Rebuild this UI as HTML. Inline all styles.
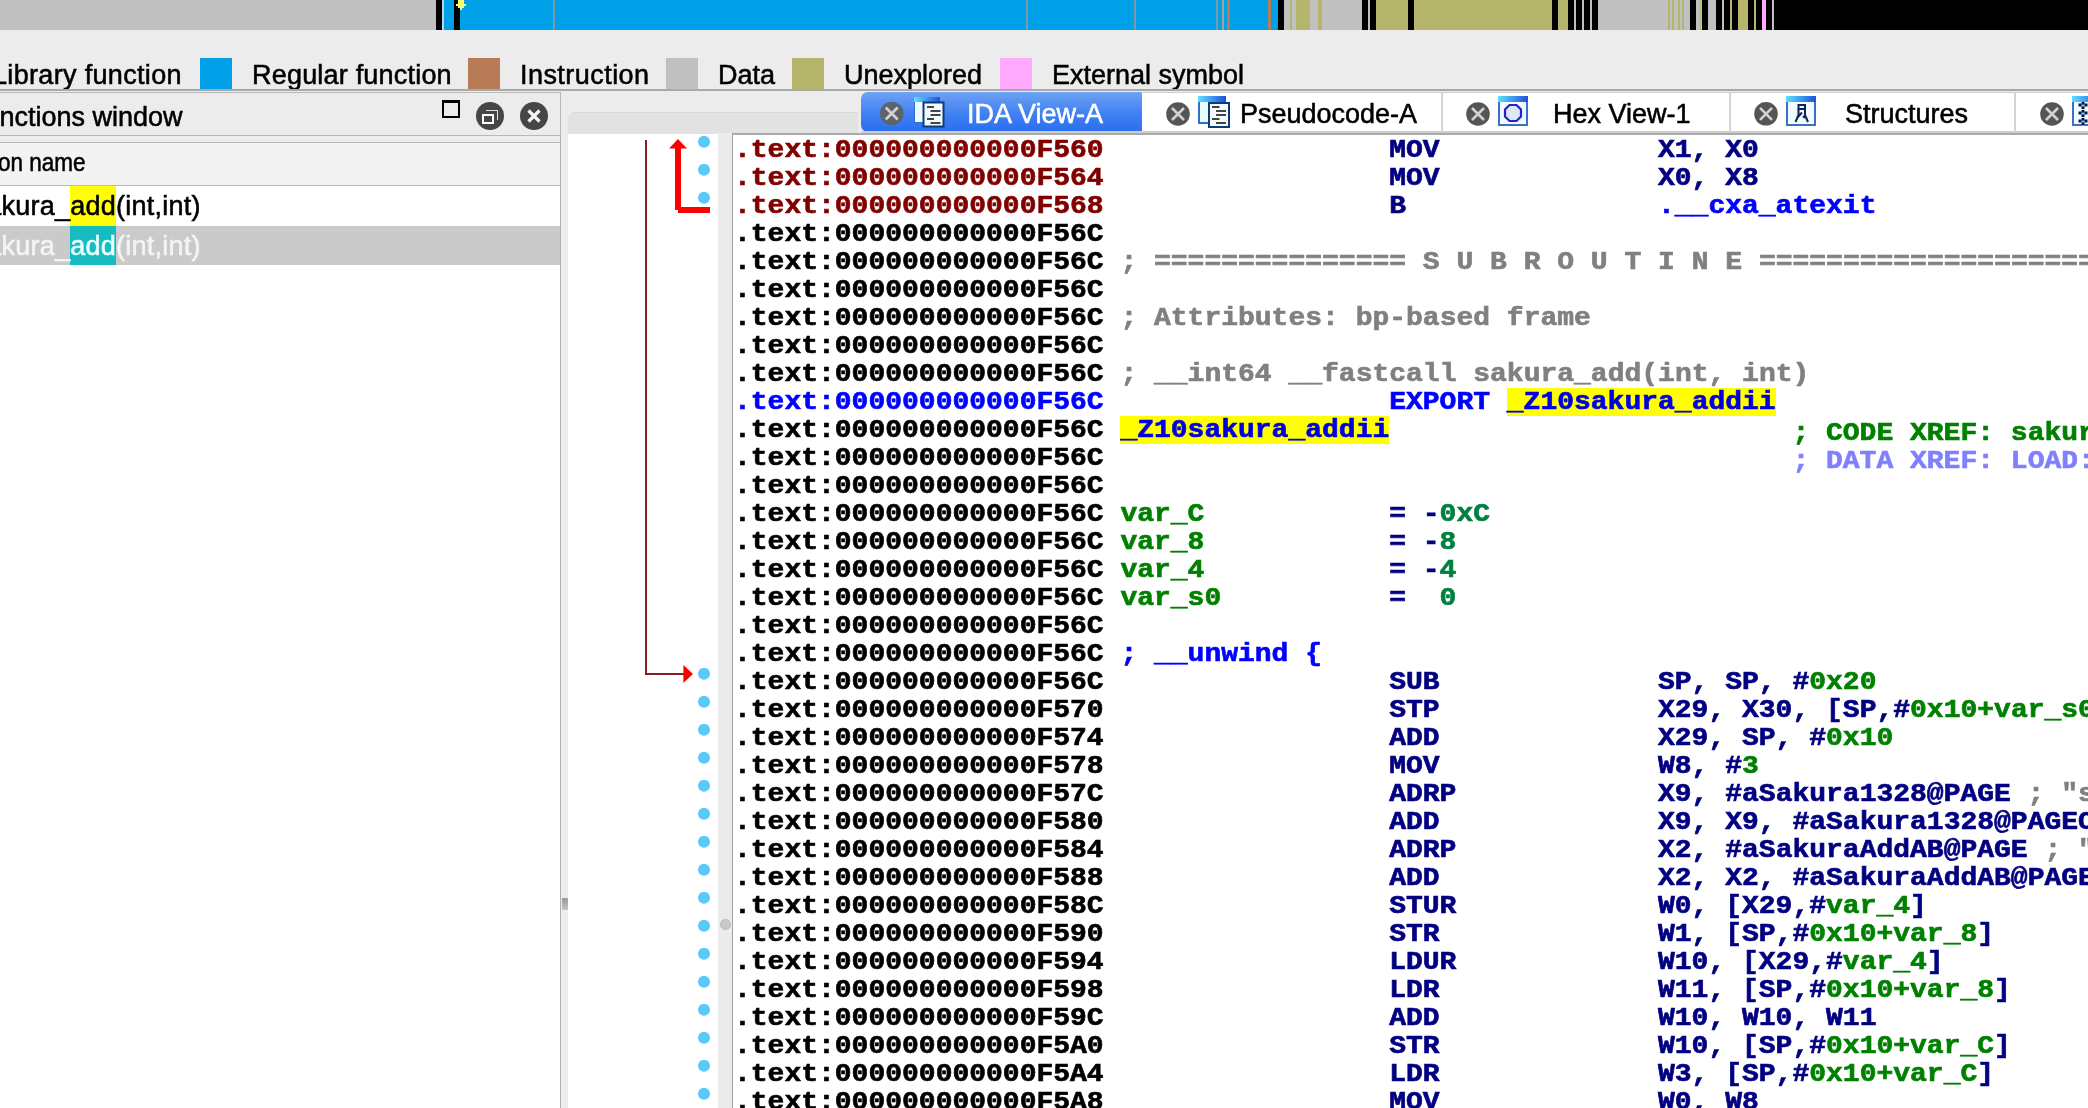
<!DOCTYPE html>
<html><head><meta charset="utf-8">
<style>
*{margin:0;padding:0;box-sizing:border-box}
html,body{width:2088px;height:1108px;overflow:hidden;background:#ececec;position:relative}
body{font-family:"Liberation Sans",sans-serif;color:#000}
.a{position:absolute}
.seg{position:absolute;top:0;height:30px}
.ui{position:absolute;font-size:27px;line-height:30px;white-space:pre;-webkit-text-stroke:0.55px currentColor}
.sq{position:absolute;top:58px;width:32px;height:32px}
.row{position:absolute;left:0;width:2088px;height:28px}
.c{position:absolute;top:0;font-family:"Liberation Mono",monospace;font-weight:bold;font-size:28px;line-height:28px;white-space:pre;height:28px;-webkit-text-stroke:0.7px currentColor;transform:scaleY(0.94);transform-origin:0 21.5px}
.xc{position:absolute;border-radius:50%;background:#555}
</style></head><body>
<div id="root" style="position:absolute;left:0;top:0;width:2088px;height:1108px;overflow:hidden;will-change:transform">
<!-- NAV BAR -->
<div class="a" id="nav" style="left:0;top:0;width:2088px;height:30px;background:#c0c0c0;overflow:hidden"><div class="seg" style="left:436px;width:6px;background:#000"></div><div class="seg" style="left:442px;width:2px;background:#b9d3e3"></div><div class="seg" style="left:444px;width:10px;background:#00a0e8"></div><div class="seg" style="left:454px;width:6px;background:#000"></div><div class="seg" style="left:460px;width:818px;background:#00a0e8"></div><div class="seg" style="left:553px;width:2px;background:#7a9aab"></div><div class="seg" style="left:1026px;width:2px;background:#7a9aab"></div><div class="seg" style="left:1134px;width:2px;background:#7a9aab"></div><div class="seg" style="left:1216px;width:2px;background:#7a9aab"></div><div class="seg" style="left:1222px;width:2px;background:#a9a28a"></div><div class="seg" style="left:1227px;width:3px;background:#b97c58"></div><div class="seg" style="left:1268px;width:3px;background:#b97c58"></div><div class="seg" style="left:1278px;width:6px;background:#000"></div><div class="seg" style="left:1290px;width:2px;background:#b5b56c"></div><div class="seg" style="left:1296px;width:14px;background:#b5b56c"></div><div class="seg" style="left:1318px;width:4px;background:#b5b56c"></div><div class="seg" style="left:1362px;width:6px;background:#000"></div><div class="seg" style="left:1370px;width:6px;background:#000"></div><div class="seg" style="left:1376px;width:32px;background:#b5b56c"></div><div class="seg" style="left:1408px;width:6px;background:#000"></div><div class="seg" style="left:1414px;width:138px;background:#b5b56c"></div><div class="seg" style="left:1552px;width:6px;background:#000"></div><div class="seg" style="left:1558px;width:10px;background:#b5b56c"></div><div class="seg" style="left:1568px;width:6px;background:#000"></div><div class="seg" style="left:1576px;width:6px;background:#000"></div><div class="seg" style="left:1584px;width:6px;background:#000"></div><div class="seg" style="left:1592px;width:6px;background:#000"></div><div class="seg" style="left:1668px;width:2px;background:#b5b56c"></div><div class="seg" style="left:1672px;width:2px;background:#b5b56c"></div><div class="seg" style="left:1678px;width:2px;background:#b5b56c"></div><div class="seg" style="left:1682px;width:2px;background:#b5b56c"></div><div class="seg" style="left:1690px;width:6px;background:#000"></div><div class="seg" style="left:1700px;width:1px;background:#b5b56c"></div><div class="seg" style="left:1702px;width:6px;background:#000"></div><div class="seg" style="left:1716px;width:6px;background:#000"></div><div class="seg" style="left:1724px;width:6px;background:#000"></div><div class="seg" style="left:1730px;width:2px;background:#b5b56c"></div><div class="seg" style="left:1732px;width:6px;background:#000"></div><div class="seg" style="left:1738px;width:10px;background:#b5b56c"></div><div class="seg" style="left:1748px;width:6px;background:#000"></div><div class="seg" style="left:1754px;width:2px;background:#b5b56c"></div><div class="seg" style="left:1756px;width:6px;background:#000"></div><div class="seg" style="left:1762px;width:4px;background:#ffaaff"></div><div class="seg" style="left:1766px;width:6px;background:#000"></div><div class="seg" style="left:1774px;width:314px;background:#000"></div><div class="seg" style="left:458px;width:6px;height:8px;background:#f4ff6e"></div><div class="seg" style="left:456px;top:4px;width:10px;height:2px;background:#f4ff6e"></div><div class="seg" style="left:460px;top:8px;width:2px;height:2px;background:#f4ff6e"></div></div>


<!-- LEGEND -->
<div class="ui" style="left:-8px;top:60px;letter-spacing:0.33px">Library function</div>
<div class="sq" style="left:200px;background:#00a0e8"></div>
<div class="ui" style="left:252px;top:60px;letter-spacing:0.2px">Regular function</div>
<div class="sq" style="left:468px;background:#b97c58"></div>
<div class="ui" style="left:520px;top:60px;letter-spacing:0.45px">Instruction</div>
<div class="sq" style="left:666px;background:#c0c0c0"></div>
<div class="ui" style="left:718px;top:60px">Data</div>
<div class="sq" style="left:792px;background:#b5b56c"></div>
<div class="ui" style="left:844px;top:60px">Unexplored</div>
<div class="sq" style="left:1000px;background:#ffaaff"></div>
<div class="ui" style="left:1052px;top:60px">External symbol</div>
<div class="a" style="left:0;top:89px;width:2088px;height:2px;background:#a9a9a9"></div>

<!-- LEFT PANEL -->
<div class="a" style="left:-2px;top:92px;width:563px;height:44px;border:1px solid #b8b8b8;background:#ececec"></div>
<div class="ui" style="left:-32px;top:102px">Functions window</div>
<div class="a" style="left:442px;top:100px;width:18px;height:18px;border:2px solid #000;border-top-width:3.5px"></div>
<div class="xc" style="left:476px;top:102px;width:28px;height:28px;background:#464646"></div>
<div class="a" style="left:486px;top:110px;width:12px;height:10px;border:1.5px solid #e0e0e0;border-bottom:0;border-left:0"></div>
<div class="a" style="left:482px;top:114px;width:12px;height:10px;background:#464646;border:2px solid #fff"></div>
<div class="xc" style="left:520px;top:102px;width:28px;height:28px;background:#464646"></div>
<svg class="a" style="left:520px;top:102px" width="28" height="28"><path d="M8.5 8.5 L19.5 19.5 M19.5 8.5 L8.5 19.5" stroke="#f4f4f4" stroke-width="3.2"/></svg>

<div class="a" style="left:-2px;top:142px;width:563px;height:44px;border:1px solid #b8b8b8;background:#f3f3f3"></div>
<div class="ui" style="left:-2px;top:146.5px;font-size:25px;transform:scaleX(0.9);transform-origin:left">on name</div>
<div class="a" style="left:0;top:186px;width:560px;height:922px;background:#fff"></div>
<div class="a" style="left:0;top:226px;width:560px;height:39px;background:#cacaca"></div>
<div class="a" style="left:70px;top:186px;width:46px;height:40px;background:#ffff00"></div>
<div class="ui" style="left:-27.6px;top:190.5px;letter-spacing:0.25px">sakura_add(int,int)</div>
<div class="a" style="left:70px;top:226px;width:46px;height:39px;background:#17bcc0"></div>
<div class="ui" style="left:-27.6px;top:230.5px;letter-spacing:0.25px;color:#f4f4f4">sakura_<span style="color:#e8ffff">add</span>(int,int)</div>
<div class="a" style="left:560px;top:136px;width:1px;height:972px;background:#b0b0b0"></div>
<div class="a" style="left:562px;top:898px;width:6px;height:12px;background:linear-gradient(#9a9a9a,#c4c4c4);border-radius:1px"></div>

<!-- TAB BAR -->
<div class="a" style="left:568px;top:112px;width:290px;height:22px;background:#e2e2e2;border-top-left-radius:8px;border-top:1px solid #d8d8d8"></div>
<div class="a" style="left:1141px;top:92px;width:947px;height:40px;background:#fff"></div>
<div class="a" style="left:861px;top:92px;width:281px;height:40px;background:linear-gradient(#6ea2f4,#3f80f2 55%,#2a6ef0);border-radius:7px 0 0 7px"></div>
<div class="a" style="left:861px;top:131px;width:1227px;height:2px;background:#cfcfcf"></div>
<div class="a" style="left:732px;top:133px;width:1356px;height:2px;background:#a9a9a9"></div>
<div class="a" style="left:1141px;top:92px;width:947px;height:1px;background:#cfcfcf"></div>
<div class="a" style="left:1441px;top:93px;width:1.5px;height:38px;background:#d4d4d4"></div>
<div class="a" style="left:1729px;top:93px;width:1.5px;height:38px;background:#d4d4d4"></div>
<div class="a" style="left:2014px;top:93px;width:1.5px;height:38px;background:#d4d4d4"></div>
<svg class="a" style="left:0;top:0" width="2088" height="136">
<defs>
<linearGradient id="tb" x1="0" x2="1" y1="0" y2="0"><stop offset="0" stop-color="#5ee0ff"/><stop offset="1" stop-color="#2050d8"/></linearGradient>
</defs>
<!-- close circles -->
<circle cx="891.7" cy="113.5" r="11.8" fill="#5b636b"/>
<path d="M885.7 107.5 L897.7 119.5 M897.7 107.5 L885.7 119.5" stroke="#d2d2d2" stroke-width="2.6"/>
<circle cx="1178" cy="114" r="11.8" fill="#555"/>
<path d="M1172 108 L1184 120 M1184 108 L1172 120" stroke="#d2d2d2" stroke-width="2.6"/>
<circle cx="1478" cy="114" r="11.8" fill="#555"/>
<path d="M1472 108 L1484 120 M1484 108 L1472 120" stroke="#d2d2d2" stroke-width="2.6"/>
<circle cx="1766" cy="113.8" r="11.8" fill="#555"/>
<path d="M1760 107.8 L1772 119.8 M1772 107.8 L1760 119.8" stroke="#d2d2d2" stroke-width="2.6"/>
<circle cx="2052" cy="114" r="11.8" fill="#555"/>
<path d="M2046 108 L2058 120 M2058 108 L2046 120" stroke="#d2d2d2" stroke-width="2.6"/>

<!-- doc icon tab1 -->
<g transform="translate(914,97)">
<rect x="0.5" y="0.5" width="25" height="25" fill="#d8f4ff" stroke="#2f6fd0" stroke-width="1"/>
<rect x="0" y="0" width="26" height="5" fill="url(#tb)"/>
<rect x="1" y="5" width="8" height="20" fill="#eefcff"/>
<rect x="9.5" y="5.5" width="20" height="24" fill="#f4fbff" stroke="#0d3a78" stroke-width="2"/>
<rect x="13" y="9" width="7" height="2" fill="#444"/>
<rect x="16.5" y="13" width="10" height="2" fill="#444"/>
<rect x="16.5" y="17" width="10" height="2" fill="#444"/>
<rect x="13" y="21" width="7" height="2" fill="#444"/>
<rect x="16.5" y="25" width="10" height="2" fill="#444"/>
</g>
<!-- doc icon tab2 -->
<g transform="translate(1198,96)">
<rect x="1" y="1" width="26" height="26" fill="#d8f6ff" stroke="#2f6fd0" stroke-width="2"/>
<rect x="0" y="0" width="28" height="6" fill="url(#tb)"/>
<rect x="2" y="6" width="8" height="20" fill="#eafcff"/>
<rect x="11" y="7" width="20" height="24" fill="#f4fbff" stroke="#0d3a78" stroke-width="2"/>
<rect x="14" y="10" width="7.5" height="2" fill="#444"/>
<rect x="18" y="14" width="10" height="2" fill="#444"/>
<rect x="18" y="18" width="10" height="2" fill="#444"/>
<rect x="14" y="22" width="7.5" height="2" fill="#444"/>
<rect x="18" y="26" width="10" height="2" fill="#444"/>
</g>
<!-- hex icon -->
<g transform="translate(1498,96)">
<rect x="1" y="1" width="28" height="28" fill="#f2fbff" stroke="#3374c8" stroke-width="2"/>
<rect x="0" y="0" width="30" height="6" fill="url(#tb)"/>
<path d="M11.5 9 L18.5 9 L23 13.5 L23 20.5 L18.5 25 L11.5 25 L7 20.5 L7 13.5 Z" fill="#dde8fa" stroke="#2424c8" stroke-width="2.2"/>
</g>
<!-- struct icon -->
<g transform="translate(1786,96)">
<rect x="1" y="1" width="28" height="28" fill="#f2fbff" stroke="#3a70c8" stroke-width="2"/>
<rect x="0" y="0" width="30" height="6" fill="url(#tb)"/>
<rect x="12.5" y="9" width="6.5" height="4" fill="none" stroke="#0a2456" stroke-width="2"/>
<path d="M12.5 13 L12.5 19 L9.5 26 M19 13 L19 19 L22 26 M11 22 L16 16.5 M17 20 L19 22" stroke="#0a2456" stroke-width="2" fill="none"/>
</g>
<!-- tab5 icon -->
<g transform="translate(2072,96)">
<rect x="1" y="1" width="28" height="28" fill="#f2fbff" stroke="#3a70c8" stroke-width="2"/>
<rect x="0" y="0" width="30" height="6" fill="url(#tb)"/>
<path d="M11 6 L11 30" stroke="#a8c8e8" stroke-width="1"/>
<g fill="#061a4a"><rect x="9.5" y="6" width="3" height="3"/><rect x="6.5" y="7.5" width="3" height="3"/><rect x="12.5" y="7.5" width="3" height="3"/><rect x="9.5" y="10" width="3" height="3"/>
<rect x="9.5" y="14" width="3" height="3"/><rect x="6.5" y="15.5" width="3" height="3"/><rect x="12.5" y="15.5" width="3" height="3"/><rect x="9.5" y="18" width="3" height="3"/>
<rect x="9.5" y="22" width="3" height="3"/><rect x="6.5" y="23.5" width="3" height="3"/><rect x="12.5" y="23.5" width="3" height="3"/><rect x="9.5" y="26" width="3" height="3"/></g>
<g fill="#50d0ff"><rect x="10" y="8.5" width="2" height="2"/><rect x="10" y="16.5" width="2" height="2"/><rect x="10" y="24.5" width="2" height="2"/></g>
</g>
</svg>
<div class="ui" style="left:967px;top:99.4px;color:#fff">IDA View-A</div>
<div class="ui" style="left:1240px;top:99.4px">Pseudocode-A</div>
<div class="ui" style="left:1553px;top:99.4px">Hex View-1</div>
<div class="ui" style="left:1845px;top:99.4px">Structures</div>


<!-- CODE AREA -->
<div class="a" style="left:568px;top:134px;width:150px;height:974px;background:#fff"></div>
<div class="a" style="left:718px;top:133px;width:14px;height:975px;background:#ebebeb"></div>
<div class="a" style="left:732px;top:135px;width:1px;height:973px;background:#a0a0a0"></div>
<div class="a" style="left:733px;top:135px;width:1355px;height:973px;background:#fff"></div>
<div class="a" style="left:720px;top:919px;width:11px;height:11px;border-radius:50%;background:#c8c8c8;border:1px solid #b8b8b8"></div>
<svg class="a" style="left:568px;top:134px" width="150" height="974">
<g transform="translate(-568,-134)">
<rect x="645" y="140" width="2" height="535" fill="#8c1b2c"/>
<rect x="645" y="673" width="40" height="2" fill="#8c1b2c"/>
<path d="M683.4 665 L683.4 683 L693 674 Z" fill="#ff0000"/>
<rect x="675" y="147" width="6" height="63" fill="#ff0000"/>
<rect x="678" y="207" width="32" height="6" fill="#ff0000"/>
<path d="M669 148.5 L687 148.5 L678 139 Z" fill="#ff0000"/>
<circle cx="704" cy="141.8" r="6" fill="#5ac8fa"/><circle cx="704" cy="169.8" r="6" fill="#5ac8fa"/><circle cx="704" cy="197.8" r="6" fill="#5ac8fa"/><circle cx="704" cy="673.8" r="6" fill="#5ac8fa"/><circle cx="704" cy="701.8" r="6" fill="#5ac8fa"/><circle cx="704" cy="729.8" r="6" fill="#5ac8fa"/><circle cx="704" cy="757.8" r="6" fill="#5ac8fa"/><circle cx="704" cy="785.8" r="6" fill="#5ac8fa"/><circle cx="704" cy="813.8" r="6" fill="#5ac8fa"/><circle cx="704" cy="841.8" r="6" fill="#5ac8fa"/><circle cx="704" cy="869.8" r="6" fill="#5ac8fa"/><circle cx="704" cy="897.8" r="6" fill="#5ac8fa"/><circle cx="704" cy="925.8" r="6" fill="#5ac8fa"/><circle cx="704" cy="953.8" r="6" fill="#5ac8fa"/><circle cx="704" cy="981.8" r="6" fill="#5ac8fa"/><circle cx="704" cy="1009.8" r="6" fill="#5ac8fa"/><circle cx="704" cy="1037.8" r="6" fill="#5ac8fa"/><circle cx="704" cy="1065.8" r="6" fill="#5ac8fa"/><circle cx="704" cy="1093.8" r="6" fill="#5ac8fa"/>
</g>
</svg>

<div class="row" style="top:135.7px"><div class="c" style="left:734px;top:0;color:#800000">.text:000000000000F560</div><div class="c" style="left:1389.2px;top:0px"><span style="color:#000080">MOV</span></div><div class="c" style="left:1658.0px;top:0px"><span style="color:#000080">X1, X0</span></div></div>
<div class="row" style="top:163.7px"><div class="c" style="left:734px;top:0;color:#800000">.text:000000000000F564</div><div class="c" style="left:1389.2px;top:0px"><span style="color:#000080">MOV</span></div><div class="c" style="left:1658.0px;top:0px"><span style="color:#000080">X0, X8</span></div></div>
<div class="row" style="top:191.7px"><div class="c" style="left:734px;top:0;color:#800000">.text:000000000000F568</div><div class="c" style="left:1389.2px;top:0px"><span style="color:#000080">B</span></div><div class="c" style="left:1658.0px;top:0px"><span style="color:#0000ff">.__cxa_atexit</span></div></div>
<div class="row" style="top:219.7px"><div class="c" style="left:734px;top:0;color:#000">.text:000000000000F56C</div></div>
<div class="row" style="top:247.7px"><div class="c" style="left:734px;top:0;color:#000">.text:000000000000F56C</div><div class="c" style="left:1120.4px;top:0px"><span style="color:#808080">; =============== S U B R O U T I N E =======================================</span></div></div>
<div class="row" style="top:275.7px"><div class="c" style="left:734px;top:0;color:#000">.text:000000000000F56C</div></div>
<div class="row" style="top:303.7px"><div class="c" style="left:734px;top:0;color:#000">.text:000000000000F56C</div><div class="c" style="left:1120.4px;top:0px"><span style="color:#808080">; Attributes: bp-based frame</span></div></div>
<div class="row" style="top:331.7px"><div class="c" style="left:734px;top:0;color:#000">.text:000000000000F56C</div></div>
<div class="row" style="top:359.7px"><div class="c" style="left:734px;top:0;color:#000">.text:000000000000F56C</div><div class="c" style="left:1120.4px;top:0px"><span style="color:#808080">; __int64 __fastcall sakura_add(int, int)</span></div></div>
<div class="row" style="top:387.7px"><div class="c" style="left:734px;top:0;color:#0000ff">.text:000000000000F56C</div><div class="c" style="left:1389.2px;top:0px"><span style="color:#0000ff">EXPORT</span></div><div class="a" style="left:1506.8px;top:0px;width:268.8px;height:28px;background:#ffff00"></div><div class="c" style="left:1506.8px;top:0px"><span style="color:#0000e0">_Z10sakura_addii</span></div></div>
<div class="row" style="top:415.7px"><div class="c" style="left:734px;top:0;color:#000">.text:000000000000F56C</div><div class="a" style="left:1120.4px;top:0px;width:268.8px;height:28px;background:#ffff00"></div><div class="c" style="left:1120.4px;top:0px"><span style="color:#0000e0">_Z10sakura_addii</span></div><div class="c" style="left:1792.4px;top:3px"><span style="color:#008000">; CODE XREF: sakura_add(int,int)+1C</span></div></div>
<div class="row" style="top:443.7px"><div class="c" style="left:734px;top:0;color:#000">.text:000000000000F56C</div><div class="c" style="left:1792.4px;top:3px"><span style="color:#8080ff">; DATA XREF: LOAD:0000000000000400</span></div></div>
<div class="row" style="top:471.7px"><div class="c" style="left:734px;top:0;color:#000">.text:000000000000F56C</div></div>
<div class="row" style="top:499.7px"><div class="c" style="left:734px;top:0;color:#000">.text:000000000000F56C</div><div class="c" style="left:1120.4px;top:0px"><span style="color:#008000">var_C</span></div><div class="c" style="left:1389.2px;top:0px"><span style="color:#000080">= -</span><span style="color:#008040">0xC</span></div></div>
<div class="row" style="top:527.7px"><div class="c" style="left:734px;top:0;color:#000">.text:000000000000F56C</div><div class="c" style="left:1120.4px;top:0px"><span style="color:#008000">var_8</span></div><div class="c" style="left:1389.2px;top:0px"><span style="color:#000080">= -</span><span style="color:#008040">8</span></div></div>
<div class="row" style="top:555.7px"><div class="c" style="left:734px;top:0;color:#000">.text:000000000000F56C</div><div class="c" style="left:1120.4px;top:0px"><span style="color:#008000">var_4</span></div><div class="c" style="left:1389.2px;top:0px"><span style="color:#000080">= -</span><span style="color:#008040">4</span></div></div>
<div class="row" style="top:583.7px"><div class="c" style="left:734px;top:0;color:#000">.text:000000000000F56C</div><div class="c" style="left:1120.4px;top:0px"><span style="color:#008000">var_s0</span></div><div class="c" style="left:1389.2px;top:0px"><span style="color:#000080">=  </span><span style="color:#008040">0</span></div></div>
<div class="row" style="top:611.7px"><div class="c" style="left:734px;top:0;color:#000">.text:000000000000F56C</div></div>
<div class="row" style="top:639.7px"><div class="c" style="left:734px;top:0;color:#000">.text:000000000000F56C</div><div class="c" style="left:1120.4px;top:0px"><span style="color:#0000ff">; __unwind {</span></div></div>
<div class="row" style="top:667.7px"><div class="c" style="left:734px;top:0;color:#000">.text:000000000000F56C</div><div class="c" style="left:1389.2px;top:0px"><span style="color:#000080">SUB</span></div><div class="c" style="left:1658.0px;top:0px"><span style="color:#000080">SP, SP, </span><span style="color:#000080">#</span><span style="color:#008000">0x20</span></div></div>
<div class="row" style="top:695.7px"><div class="c" style="left:734px;top:0;color:#000">.text:000000000000F570</div><div class="c" style="left:1389.2px;top:0px"><span style="color:#000080">STP</span></div><div class="c" style="left:1658.0px;top:0px"><span style="color:#000080">X29, X30, [SP,</span><span style="color:#000080">#</span><span style="color:#008000">0x10+var_s0</span><span style="color:#000080">]</span></div></div>
<div class="row" style="top:723.7px"><div class="c" style="left:734px;top:0;color:#000">.text:000000000000F574</div><div class="c" style="left:1389.2px;top:0px"><span style="color:#000080">ADD</span></div><div class="c" style="left:1658.0px;top:0px"><span style="color:#000080">X29, SP, </span><span style="color:#000080">#</span><span style="color:#008000">0x10</span></div></div>
<div class="row" style="top:751.7px"><div class="c" style="left:734px;top:0;color:#000">.text:000000000000F578</div><div class="c" style="left:1389.2px;top:0px"><span style="color:#000080">MOV</span></div><div class="c" style="left:1658.0px;top:0px"><span style="color:#000080">W8, </span><span style="color:#000080">#</span><span style="color:#008000">3</span></div></div>
<div class="row" style="top:779.7px"><div class="c" style="left:734px;top:0;color:#000">.text:000000000000F57C</div><div class="c" style="left:1389.2px;top:0px"><span style="color:#000080">ADRP</span></div><div class="c" style="left:1658.0px;top:0px"><span style="color:#000080">X9, </span><span style="color:#000080">#aSakura1328@PAGE</span></div><div class="c" style="left:2027.6px;top:0px"><span style="color:#808080">; &quot;sakura 1328&quot;</span></div></div>
<div class="row" style="top:807.7px"><div class="c" style="left:734px;top:0;color:#000">.text:000000000000F580</div><div class="c" style="left:1389.2px;top:0px"><span style="color:#000080">ADD</span></div><div class="c" style="left:1658.0px;top:0px"><span style="color:#000080">X9, X9, </span><span style="color:#000080">#aSakura1328@PAGEOFF</span></div></div>
<div class="row" style="top:835.7px"><div class="c" style="left:734px;top:0;color:#000">.text:000000000000F584</div><div class="c" style="left:1389.2px;top:0px"><span style="color:#000080">ADRP</span></div><div class="c" style="left:1658.0px;top:0px"><span style="color:#000080">X2, </span><span style="color:#000080">#aSakuraAddAB@PAGE</span></div><div class="c" style="left:2044.4px;top:0px"><span style="color:#808080">; &quot;sakura add %d %d&quot;</span></div></div>
<div class="row" style="top:863.7px"><div class="c" style="left:734px;top:0;color:#000">.text:000000000000F588</div><div class="c" style="left:1389.2px;top:0px"><span style="color:#000080">ADD</span></div><div class="c" style="left:1658.0px;top:0px"><span style="color:#000080">X2, X2, </span><span style="color:#000080">#aSakuraAddAB@PAGEOFF</span></div></div>
<div class="row" style="top:891.7px"><div class="c" style="left:734px;top:0;color:#000">.text:000000000000F58C</div><div class="c" style="left:1389.2px;top:0px"><span style="color:#000080">STUR</span></div><div class="c" style="left:1658.0px;top:0px"><span style="color:#000080">W0, [X29,</span><span style="color:#000080">#</span><span style="color:#008000">var_4</span><span style="color:#000080">]</span></div></div>
<div class="row" style="top:919.7px"><div class="c" style="left:734px;top:0;color:#000">.text:000000000000F590</div><div class="c" style="left:1389.2px;top:0px"><span style="color:#000080">STR</span></div><div class="c" style="left:1658.0px;top:0px"><span style="color:#000080">W1, [SP,</span><span style="color:#000080">#</span><span style="color:#008000">0x10+var_8</span><span style="color:#000080">]</span></div></div>
<div class="row" style="top:947.7px"><div class="c" style="left:734px;top:0;color:#000">.text:000000000000F594</div><div class="c" style="left:1389.2px;top:0px"><span style="color:#000080">LDUR</span></div><div class="c" style="left:1658.0px;top:0px"><span style="color:#000080">W10, [X29,</span><span style="color:#000080">#</span><span style="color:#008000">var_4</span><span style="color:#000080">]</span></div></div>
<div class="row" style="top:975.7px"><div class="c" style="left:734px;top:0;color:#000">.text:000000000000F598</div><div class="c" style="left:1389.2px;top:0px"><span style="color:#000080">LDR</span></div><div class="c" style="left:1658.0px;top:0px"><span style="color:#000080">W11, [SP,</span><span style="color:#000080">#</span><span style="color:#008000">0x10+var_8</span><span style="color:#000080">]</span></div></div>
<div class="row" style="top:1003.7px"><div class="c" style="left:734px;top:0;color:#000">.text:000000000000F59C</div><div class="c" style="left:1389.2px;top:0px"><span style="color:#000080">ADD</span></div><div class="c" style="left:1658.0px;top:0px"><span style="color:#000080">W10, W10, W11</span></div></div>
<div class="row" style="top:1031.7px"><div class="c" style="left:734px;top:0;color:#000">.text:000000000000F5A0</div><div class="c" style="left:1389.2px;top:0px"><span style="color:#000080">STR</span></div><div class="c" style="left:1658.0px;top:0px"><span style="color:#000080">W10, [SP,</span><span style="color:#000080">#</span><span style="color:#008000">0x10+var_C</span><span style="color:#000080">]</span></div></div>
<div class="row" style="top:1059.7px"><div class="c" style="left:734px;top:0;color:#000">.text:000000000000F5A4</div><div class="c" style="left:1389.2px;top:0px"><span style="color:#000080">LDR</span></div><div class="c" style="left:1658.0px;top:0px"><span style="color:#000080">W3, [SP,</span><span style="color:#000080">#</span><span style="color:#008000">0x10+var_C</span><span style="color:#000080">]</span></div></div>
<div class="row" style="top:1087.7px"><div class="c" style="left:734px;top:0;color:#000">.text:000000000000F5A8</div><div class="c" style="left:1389.2px;top:0px"><span style="color:#000080">MOV</span></div><div class="c" style="left:1658.0px;top:0px"><span style="color:#000080">W0, W8</span></div></div>
</div>
</body></html>
